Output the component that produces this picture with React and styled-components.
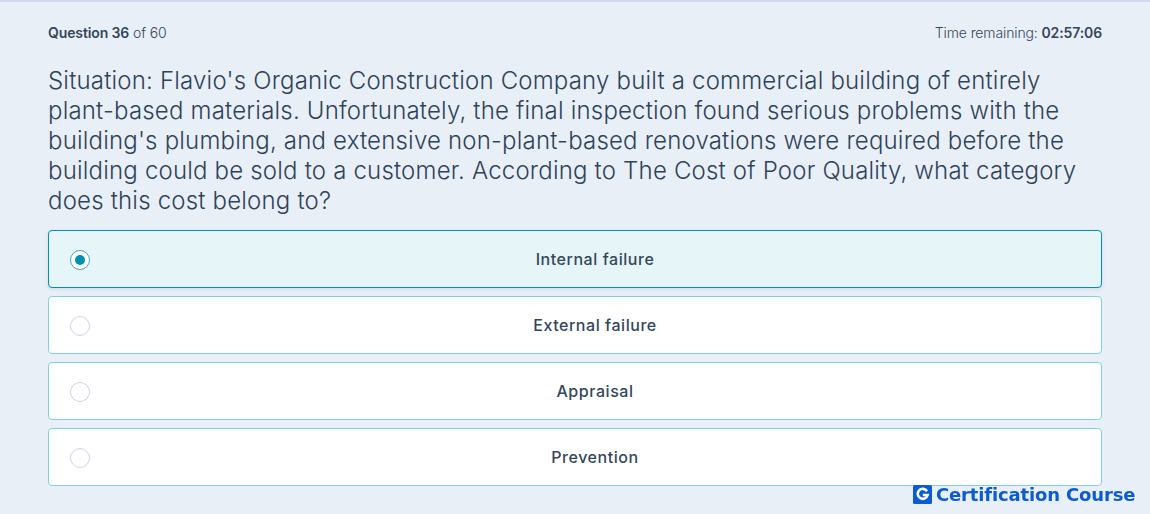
import styled, { createGlobalStyle } from "styled-components";

const GlobalStyle = createGlobalStyle`
html, body {
  margin: 0;
  height: 100%;
  overflow: hidden;
  background: #e9eff7;
}
`;

const Page = styled.div`
  height: 514px;
  box-sizing: border-box;
  padding: 21px 48px 0;
  border-top: 2px solid #cfdbea;
  background: #e9eff7;
  color: #33475b;
  font-family: Inter, "Liberation Sans", sans-serif;
`;

const TopRow = styled.div`
  display: flex;
  justify-content: space-between;
  align-items: center;
  height: 18px;
  font-size: 14px;
  font-weight: 300;
  letter-spacing: -0.12px;
  color: #33475b;
`;

const Strong = styled.b`
  font-weight: 600;
  color: #33475b;
`;

const Question = styled.h1`
  margin: 25px 0 14px;
  font-size: 24px;
  line-height: 30px;
  font-weight: 300;
  letter-spacing: 0.19px;
  color: #2f4358;
`;

const Options = styled.div`
  display: flex;
  flex-direction: column;
  gap: 8px;
`;

const Option = styled.div`
  position: relative;
  height: 58px;
  box-sizing: border-box;
  display: flex;
  align-items: center;
  justify-content: center;
  padding-left: 40px;
  border-radius: 4px;
  border: 1px solid ${(p) => (p.$selected ? "#0091ae" : "#7dd3e3")};
  background: ${(p) => (p.$selected ? "#e5f5f8" : "#ffffff")};
  box-shadow: ${(p) => (p.$selected ? "0 1px 4px rgba(45,62,80,.12)" : "none")};
  font-size: 16px;
  font-weight: 500;
  letter-spacing: 0.55px;
`;

const Radio = styled.span`
  position: absolute;
  left: 21px;
  top: 19px;
  width: 20px;
  height: 20px;
  box-sizing: border-box;
  border-radius: 50%;
  background: #fff;
  border: 1px solid ${(p) => (p.$selected ? "#3fa9bf" : "#cbd6e2")};
  display: flex;
  align-items: center;
  justify-content: center;
  &::after {
    content: "";
    display: ${(p) => (p.$selected ? "block" : "none")};
    width: 10px;
    height: 10px;
    border-radius: 50%;
    background: #0091ae;
  }
`;

const Brand = styled.div`
  position: fixed;
  left: 913px;
  top: 485px;
  display: flex;
  align-items: center;
  gap: 4px;
  color: #0b5bd3;
  font-family: "DejaVu Sans", sans-serif;
  font-size: 18px;
  font-weight: 700;
  line-height: 19px;
  letter-spacing: -0.15px;
`;

const options = ["Internal failure", "External failure", "Appraisal", "Prevention"];

const App = () => {
  return (
    <Page>
      <GlobalStyle />
      <TopRow>
        <span><Strong>Question 36</Strong> of 60</span>
        <span>Time remaining: <Strong>02:57:06</Strong></span>
      </TopRow>
      <Question>
        Situation: Flavio's Organic Construction Company built a commercial building of entirely
        plant-based materials. Unfortunately, the final inspection found serious problems with the
        building's plumbing, and extensive non-plant-based renovations were required before the
        building could be sold to a customer. According to The Cost of Poor Quality, what category
        does this cost belong to?
      </Question>
      <Options>
        {options.map((text, i) => (
          <Option key={text} $selected={i === 0}>
            <Radio $selected={i === 0} />
            {text}
          </Option>
        ))}
      </Options>
      <Brand>
        <svg width="19" height="19" viewBox="0 0 19 19">
          <rect width="19" height="19" rx="1.5" fill="#0b5bd3" />
          <path d="M14 6.2A5 5 0 1 0 14.6 10H9.8" fill="none" stroke="#fff" strokeWidth="2.6" />
        </svg>
        <span>Certification Course</span>
      </Brand>
    </Page>
  );
};

export default App;
